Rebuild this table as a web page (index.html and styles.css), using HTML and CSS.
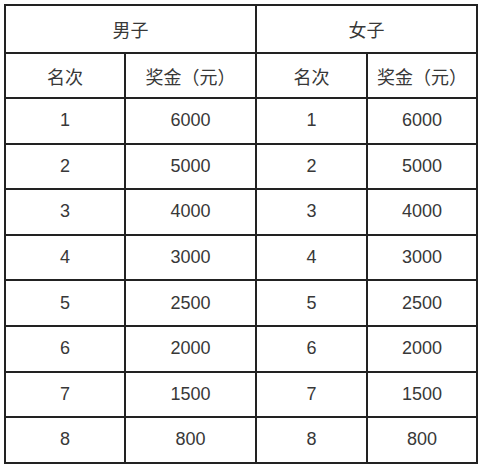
FILE: index.html
```html
<!DOCTYPE html>
<html lang="zh">
<head>
<meta charset="utf-8">
<link rel="stylesheet" href="styles.css">
</head>
<body>
<div class="wrap">
<table class="prize">
  <colgroup>
    <col class="c1"><col class="c2"><col class="c3"><col class="c4">
  </colgroup>
  <tr class="head"><td colspan="2">男子</td><td colspan="2">女子</td></tr>
  <tr class="sub"><td>名次</td><td>奖金（元）</td><td>名次</td><td>奖金（元）</td></tr>
  <tr><td>1</td><td>6000</td><td>1</td><td>6000</td></tr>
  <tr><td>2</td><td>5000</td><td>2</td><td>5000</td></tr>
  <tr><td>3</td><td>4000</td><td>3</td><td>4000</td></tr>
  <tr><td>4</td><td>3000</td><td>4</td><td>3000</td></tr>
  <tr><td>5</td><td>2500</td><td>5</td><td>2500</td></tr>
  <tr><td>6</td><td>2000</td><td>6</td><td>2000</td></tr>
  <tr><td>7</td><td>1500</td><td>7</td><td>1500</td></tr>
  <tr><td>8</td><td>800</td><td>8</td><td>800</td></tr>
</table>
</div>
</body>
</html>
```

FILE: styles.css
```css
html, body {
  margin: 0;
  padding: 0;
  background: #ffffff;
}
.wrap {
  padding: 4px 0 0 4px;
}
.prize {
  border-collapse: collapse;
  table-layout: fixed;
  width: 472px;
  font-family: "Liberation Sans", "Noto Sans CJK SC", sans-serif;
  font-size: 18px;
  color: #383838;
}
.c1 { width: 120px; }
.c2 { width: 131px; }
.c3 { width: 111px; }
.c4 { width: 110px; }
.prize td {
  border: 2px solid #222222;
  text-align: center;
  vertical-align: middle;
  padding: 0;
  height: 43.6px;
}
.prize .head td {
  height: 46px;
}
.prize .sub td {
  height: 43px;
}
```
